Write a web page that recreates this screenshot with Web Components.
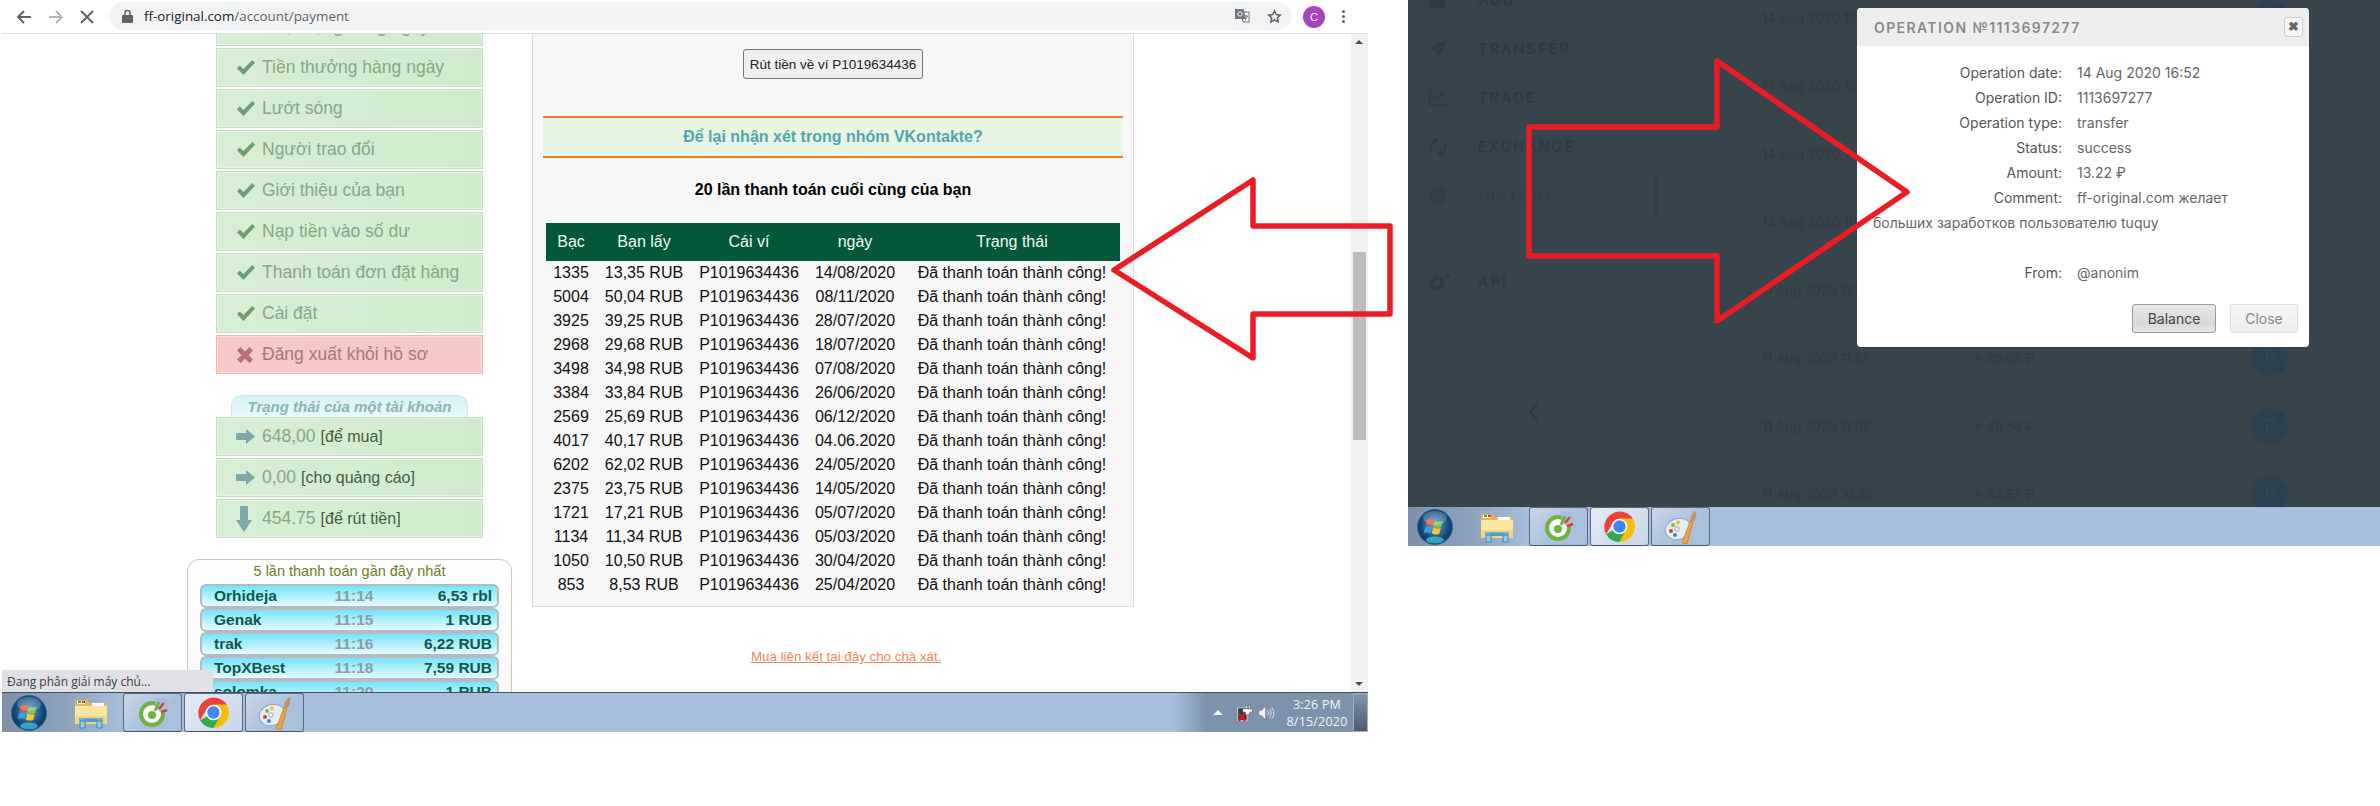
<!DOCTYPE html>
<html lang="vi">
<head>
<meta charset="utf-8">
<title>ff-original payment</title>
<style>
  html, body { margin: 0; background: #fff; }
  body { position: relative; width: 2380px; height: 806px; overflow: hidden; font-family: "Liberation Sans", Arial, sans-serif; }
  .shots { display: flex; align-items: flex-start; padding-left: 2px; }
</style>
</head>
<body>
<div class="shots">
  <browser-window url="ff-original.com" path="/account/payment">
    <account-sidebar></account-sidebar>
    <payment-panel></payment-panel>
    <span slot="status">Đang phân giải máy chủ...</span>
  </browser-window>
  <dark-window>
    <op-modal number="1113697277"></op-modal>
  </dark-window>
</div>
<red-arrow points="1114,270 1253,180 1253,226 1390,226 1390,314 1253,314 1253,358"></red-arrow>
<red-arrow points="1907,192 1717,61 1717,127 1529,127 1529,256 1717,256 1717,321"></red-arrow>

<script>
const ICONS = {
  check: `<svg width="20" height="17" viewBox="0 0 20 17"><path fill="currentColor" d="M1 9.2 3.7 6.4 7.4 10 16.3.9 19 3.700 7.4 16z"/></svg>`,
  cross: `<svg width="18" height="18" viewBox="0 0 18 18"><path fill="currentColor" d="M4.500 1 9 5.500 13.500 1 17 4.500 12.500 9 17 13.500 13.500 17 9 12.500 4.500 17 1 13.500 5.500 9 1 4.500z"/></svg>`,
  right: `<svg width="20" height="17" viewBox="0 0 20 17"><path fill="currentColor" d="M1 5h9V1l9 7.500-9 7.500v-4H1a1 1 0 0 1-1-1V6a1 1 0 0 1 1-1z"/></svg>`,
  down: `<svg width="16" height="26" viewBox="0 0 16 26"><path fill="currentColor" d="M5 0h6a1 1 0 0 1 1 1v13h4l-8 12-8-12h4V1a1 1 0 0 1 1-1z"/></svg>`,
  orb: `<svg width="36" height="36" viewBox="0 0 36 36"><defs><radialGradient id="o" cx=".5" cy=".45" r=".6"><stop offset="0" stop-color="#5fa8d8"/><stop offset=".65" stop-color="#154a7e"/><stop offset="1" stop-color="#0b2a4c"/></radialGradient></defs><circle cx="18" cy="18" r="17.500" fill="url(#o)" stroke="#1e6e98"/><path fill="#e8552b" d="M10 11c3-1.500 5-1 7 .2l-1.600 6c-2-1.200-4-1.500-7-.2z"/><path fill="#8cc63f" d="M18 11.700c2.500 1.300 4.500 1.500 7.500.2l-1.500 6c-3 1.300-5 1-7.500-.2z"/><path fill="#3aa0e0" d="M8.200 18c3-1.300 5-1 7 .2l-1.600 6c-2-1.200-4-1.500-7-.2z"/><path fill="#fdc52f" d="M16.300 18.500c2.500 1.300 4.500 1.500 7.500.2l-1.500 6c-3 1.300-5 1-7.500-.2z"/><ellipse cx="18" cy="9" rx="12" ry="7" fill="#fff" opacity=".22"/><ellipse cx="18" cy="31" rx="9" ry="3.500" fill="#46d6e8" opacity=".65"/></svg>`,
  folder: `<svg width="34" height="32" viewBox="0 0 34 32"><path fill="#e2b95a" d="M1 3h12l2 3h17a1 1 0 0 1 1 1v20H1z"/><path fill="#fff" d="M3 4h8v3H3zM18 6h12v3H18z"/><path fill="#d34" d="M8 4h3v2H8z"/><path fill="#3a3" d="M4 4h3v2H4z"/><path fill="#fbe6a2" d="M1 9h32v18H1z"/><path fill="#f5d67d" d="M1 19h32v8H1z"/><path fill="#6fb2dc" d="M5 21h24v3H5z"/><path fill="#8fcdea" stroke="#3d87b8" d="M6 24h5v7H6zM23 24h5v7h-5z"/><path fill="#4f9ccc" d="M11 22h12v3H11z"/></svg>`,
  coccoc: `<svg width="30" height="30" viewBox="0 0 30 30"><circle cx="14" cy="16" r="13" fill="#6db43e"/><circle cx="14" cy="16" r="9" fill="#fff"/><circle cx="14" cy="17" r="4" fill="#6db43e"/><path fill="#a7bfdc" d="M17 0h13v14H22l-4-4z"/><path fill="none" stroke="#6db43e" stroke-width="3" d="M17 13 21 4"/><path fill="none" stroke="#d8432e" stroke-width="2.500" d="M21 11 26 5M23 14l6-2"/></svg>`,
  chrome: `<svg width="31" height="31" viewBox="4 4 40 40"><path fill="#ea4335" d="M41.300 14A20 20 0 0 0 6.700 34L15.300 19 24 14z"/><path fill="#34a853" d="M6.700 34A20 20 0 0 0 24 44L32.700 29H15.300z"/><path fill="#fbbc04" d="M24 44A20 20 0 0 0 41.300 14H24L32.700 29z"/><circle cx="24" cy="24" r="10" fill="#fff"/><circle cx="24" cy="24" r="8" fill="#4285f4"/></svg>`,
  palette: `<svg width="34" height="34" viewBox="0 0 34 34"><ellipse cx="14" cy="19" rx="13" ry="10.500" transform="rotate(-18 14 19)" fill="#e5ecf2" stroke="#8fa3b6"/><circle cx="7" cy="21" r="2" fill="#d8432e"/><circle cx="9" cy="15" r="2" fill="#7bbf43"/><circle cx="14" cy="12.500" r="2" fill="#f2c230"/><circle cx="13" cy="19" r="2.200" fill="#fff" stroke="#8fa3b6"/><circle cx="11" cy="25" r="2" fill="#3d87c8"/><path fill="#eea23c" stroke="#b8752a" stroke-width=".6" d="M18 33 26 11l3 1-6 22z"/><path fill="#c9915a" d="M26 11c0-4 2-8 6-10 1 4 0 8-3 11z"/></svg>`,
  power: `<svg width="20" height="22" viewBox="0 0 20 22"><path fill="#2c3a46" stroke="#dde" d="M2 5h11v15H2z"/><path fill="#fff" stroke="#333" stroke-width=".5" d="M8 6h11v4h-3v3h-5v-3H8zM11 2h2v4h-2zM15 2h2v4h-2z"/><path fill="none" stroke="#e0141c" stroke-width="3" d="M3 12l8 8m0-8-8 8"/></svg>`,
  speaker: `<svg width="20" height="18" viewBox="0 0 20 18"><path fill="#eef2f6" stroke="#5c6d80" stroke-width=".6" d="M1 6h3l5-5v16l-5-5H1z"/><path fill="none" stroke="#eef2f6" d="M11 6c1.500 2 1.500 4 0 6M13.500 4c2.500 3 2.500 7 0 10M16 2c3.500 4 3.500 10 0 14"/></svg>`,
  back: `<svg width="16" height="16" viewBox="0 0 16 16"><path fill="none" stroke="currentColor" stroke-width="2" d="M15 8H2M8 2 2 8l6 6"/></svg>`,
  forward: `<svg width="16" height="16" viewBox="0 0 16 16"><path fill="none" stroke="currentColor" stroke-width="2" d="M1 8h13M8 2l6 6-6 6"/></svg>`,
  stop: `<svg width="14" height="14" viewBox="0 0 14 14"><path fill="none" stroke="currentColor" stroke-width="2" d="M1 1l12 12M13 1 1 13"/></svg>`,
  lock: `<svg width="11" height="14" viewBox="0 0 11 14"><path fill="#5f6368" d="M1 6h9a1 1 0 0 1 1 1v6a1 1 0 0 1-1 1H1a1 1 0 0 1-1-1V7a1 1 0 0 1 1-1z"/><path fill="none" stroke="#5f6368" stroke-width="1.500" d="M3 6V4a2.500 2.500 0 0 1 5 0v2"/></svg>`,
  translate: `<svg width="15" height="14" viewBox="0 0 15 14"><path fill="#fff" stroke="#70757a" d="M6 3h8v10H8z"/><path fill="#70757a" d="M0 0h8.500l2.500 10H0z"/><circle cx="5" cy="5" r="2.200" fill="none" stroke="#fff"/><path stroke="#70757a" d="M10 7h3M11.500 6v1M10.500 11l2-4"/></svg>`,
  star: `<svg width="15" height="15" viewBox="0 0 24 24"><path fill="none" stroke="#5f6368" stroke-width="2.500" d="M12 3l2.800 6 6.500.8-4.800 4.500 1.300 6.500L12 17.500 6.200 20.800l1.300-6.500L2.700 9.800 9.200 9z"/></svg>`,
  plane: `<svg width="18" height="18" viewBox="0 0 18 18"><path fill="currentColor" d="M18 0 0 8l7 3 2 7z"/></svg>`,
  chart: `<svg width="18" height="16" viewBox="0 0 18 16"><path fill="none" stroke="currentColor" stroke-width="1.300" d="M1 0v15h16M3 12l3-6 3 4 3-8 2 5 2-6"/></svg>`,
  swap: `<svg width="18" height="18" viewBox="0 0 18 18"><path fill="none" stroke="currentColor" stroke-width="1.500" d="M3 13A7 7 0 0 1 8 2M15 5a7 7 0 0 1-5 11M6 0l2.500 2L6 5M12 18l-2.500-2 2.500-3"/></svg>`,
  clock: `<svg width="18" height="18" viewBox="0 0 18 18"><circle cx="9" cy="9" r="8.500" fill="#2f414d"/><path fill="none" stroke="#37444c" stroke-width="1.800" d="M9 4v5.500h4"/></svg>`,
  gears: `<svg width="22" height="18" viewBox="0 0 22 18"><circle cx="8" cy="10" r="5" fill="none" stroke="currentColor" stroke-width="3.500"/><path stroke="currentColor" stroke-width="2.500" d="M8 1v3M8 16v2M0 10h3M13 10h3M2.500 4.500l2 2M11.500 13.500l2 2M13.500 4.500l-2 2M4.500 13.500l-2 2"/><circle cx="19" cy="3" r="2" fill="currentColor"/></svg>`,
  box: `<svg width="16" height="16" viewBox="0 0 16 16"><rect width="16" height="16" rx="2" fill="currentColor"/></svg>`,
};

class BrowserWindow extends HTMLElement {
  constructor() {
    super();
    this.attachShadow({ mode: "open" });
    this.shadowRoot.innerHTML = `
      <style>
        :host { display: flex; flex-direction: column; flex: none; width: 1366px; height: 732px; }
        .toolbar { flex: none; height: 33px; border-bottom: 1px solid #dadce0; display: flex; align-items: center; color: #5f6368; }
        .nav { width: 108px; padding-left: 14px; box-sizing: border-box; display: flex; align-items: center; gap: 16px; flex: none; }
        .nav .fwd { color: #b4b6b9; }
        .nav span { display: flex; }
        .omni { width: 1182px; height: 28px; margin-top: -1px; flex: none; border-radius: 14px; background: #f1f3f4; display: flex; align-items: center; padding: 0 10px 0 12px; box-sizing: border-box; font: 13.400px "Open Sans", sans-serif; color: #5f6368; }
        .omni b { font-weight: 400; color: #202124; margin-left: 11px; }
        .omni .end { margin-left: auto; display: flex; align-items: center; gap: 17px; }
        .omni svg { display: block; }
        .avatar { width: 22px; height: 22px; border-radius: 50%; background: #a742c0; color: #fff; font: 11px "Liberation Sans", sans-serif; display: flex; align-items: center; justify-content: center; margin-left: 11px; flex: none; }
        .dots { margin-left: 17px; display: flex; flex-direction: column; gap: 2px; }
        .dots i { width: 3px; height: 3px; border-radius: 50%; background: #5f6368; display: block; }
        .view { flex: 1; min-height: 0; position: relative; display: flex; overflow: hidden; }
        .page { flex: 1; min-width: 0; overflow: hidden; display: flex; align-items: flex-start; padding-left: 185px; gap: 20px; }
        .scroll { width: 17px; flex: none; background: #f1f1f1; position: relative; }
        .thumb { position: absolute; left: 2px; right: 2px; top: 218px; height: 188px; background: #bdbdbd; }
        .scroll::before, .scroll::after { content: ""; position: absolute; left: 4px; border: 4px solid transparent; border-left-width: 4.500px; border-right-width: 4.500px; }
        .scroll::before { top: 6px; border-top: 0; border-bottom: 4px solid #505050; }
        .scroll::after { bottom: 6px; border-bottom: 0; border-top: 4px solid #505050; }
        .status { position: absolute; left: 0; bottom: 0; width: 211px; height: 22px; background: #dfe1e5; border-radius: 0 5px 0 0; box-sizing: border-box; padding-left: 5px; font: 12px/23px "Open Sans", sans-serif; color: #3c4043; }
      </style>
      <div class="toolbar">
        <div class="nav"><span>${ICONS.back}</span><span class="fwd">${ICONS.forward}</span><span>${ICONS.stop}</span></div>
        <div class="omni">${ICONS.lock}<b>${this.getAttribute("url")}</b>${this.getAttribute("path")}
          <div class="end">${ICONS.translate}${ICONS.star}</div></div>
        <div class="avatar">C</div>
        <div class="dots"><i></i><i></i><i></i></div>
      </div>
      <div class="view">
        <div class="page"><slot></slot></div>
        <div class="scroll"><div class="thumb"></div></div>
        <div class="status"><slot name="status"></slot></div>
      </div>
      <task-bar tray></task-bar>
    `;
  }
}

class TaskBar extends HTMLElement {
  constructor() {
    super();
    this.attachShadow({ mode: "open" });
    const tray = this.hasAttribute("tray") ? `
      <div class="tray">
        <i class="up"></i>${ICONS.power}${ICONS.speaker}
        <div class="clock"><div>3:26 PM</div><div>8/15/2020</div></div>
        <div class="desk"></div>
      </div>` : "";
    this.shadowRoot.innerHTML = `
      <style>
        :host { display: flex; flex: none; height: 40px; background: #a7bfdc; box-sizing: border-box; border-top: 1px solid #46505c; }
        :host([flat]) { height: 39px; border-top: 0; }
        .start { width: 121px; flex: none; display: flex; align-items: center; gap: 27px; padding-left: 9px; box-sizing: border-box; background: linear-gradient(90deg, #7e90a8, #8fa3bd 55%, #a7bfdc); }
        .apps { display: flex; gap: 2px; }
        .app { width: 59px; box-sizing: border-box; display: flex; align-items: center; justify-content: center; border: 1px solid #5b6b7d; border-bottom-color: #46566a; border-radius: 3px; background: linear-gradient(135deg, #c8d6e8, #a9c0dc 60%); }
        .app.on { background: linear-gradient(135deg, #e4ebf4, #c6d5e8); }
        .tray { margin-left: auto; width: 195px; box-sizing: border-box; padding-left: 40px; display: flex; align-items: center; background: linear-gradient(90deg, #a7bfdc, #7d92ab 34px); color: #f2f5f8; }
        .up { width: 0; height: 0; border: 5px solid transparent; border-top: 0; border-bottom: 5px solid #f2f5f8; margin-right: 13px; }
        .tray svg:nth-of-type(2) { margin-left: 5px; }
        .clock { font: 12.500px/17px "Open Sans", sans-serif; text-align: center; width: 72px; margin-left: 6px; flex: none; letter-spacing: .2px; }
        .desk { width: 15px; height: 39px; box-sizing: border-box; margin-left: auto; flex: none; border: 1px solid #9fb0c2; background: linear-gradient(#8295ab, #4d5c6e); }
      </style>
      <div class="start">${ICONS.orb}${ICONS.folder}</div>
      <div class="apps">
        <div class="app">${ICONS.coccoc}</div>
        <div class="app on">${ICONS.chrome}</div>
        <div class="app">${ICONS.palette}</div>
      </div>
      ${tray}
    `;
  }
}

class SideLink extends HTMLElement {
  constructor() {
    super();
    this.attachShadow({ mode: "open" });
    this.shadowRoot.innerHTML = `
      <style>
        :host { display: flex; align-items: center; flex: none; width: 267px; height: 39px; box-sizing: border-box; padding-left: 19px; background: linear-gradient(90deg, #d7efd4, #d0ebcc); border: 1px solid #c4dfc0; outline: 1px solid #e6f3e4; outline-offset: -2px; color: #85a886; font-size: 17.500px; white-space: nowrap; }
        :host([tone="red"]) { background: #f6c9c6; border-color: #eab5b2; outline-color: #fadddb; color: #a87a78; }
        .ico { width: 26px; flex: none; display: flex; color: #6f9e72; }
        :host([tone="red"]) .ico { color: #b9706e; }
        :host([tone="blue"]) .ico { color: #7fa8a8; }
        ::slotted(small) { font-size: 16px; color: #3f5f3f; margin-left: 5px; }
      </style>
      <span class="ico">${ICONS[this.getAttribute("icon") || "check"]}</span><slot></slot>
    `;
  }
}

class AccountSidebar extends HTMLElement {
  constructor() {
    super();
    this.attachShadow({ mode: "open" });
    const links = ["Hoạt động hàng ngày", "Tiền thưởng hàng ngày", "Lướt sóng", "Người trao đổi", "Giới thiệu của bạn", "Nạp tiền vào số dư", "Thanh toán đơn đặt hàng", "Cài đặt"];
    const recent = [["Orhideja", "11:14", "6,53 rbl"], ["Genak", "11:15", "1 RUB"], ["trak", "11:16", "6,22 RUB"], ["TopXBest", "11:18", "7,59 RUB"], ["solomka", "11:20", "1 RUB"]];
    this.shadowRoot.innerHTML = `
      <style>
        :host { display: flex; flex-direction: column; align-items: center; flex: none; width: 325px; margin-top: -27px; gap: 2px; }
        .tab { flex: none; width: 237px; height: 22px; margin-top: 19px; margin-bottom: -2px; box-sizing: border-box; border: 1px solid #cfe7ea; border-bottom: 0; border-radius: 10px 10px 0 0; background: linear-gradient(#d8f1f5, #e9f8fa); text-align: center; font: italic bold 15px/21px "Liberation Sans", sans-serif; color: #8eb3b8; white-space: nowrap; }
        .recent { flex: none; width: 325px; margin-top: 19px; box-sizing: border-box; padding: 0 12px 12px; border: 1px solid #c9c9c9; border-radius: 12px; background: linear-gradient(#fff, #f7f7f7); }
        .recent h4 { margin: 0; height: 24px; font: 400 14.500px/22px "Liberation Sans", sans-serif; color: #6d7c1c; text-align: center; }
        .line { height: 24px; box-sizing: border-box; border: 2px solid #b4bcc1; border-radius: 6px; background: linear-gradient(#77e2fa, #e8fcff); display: grid; grid-template-columns: 110px 60px 1fr; align-items: center; padding: 0 5px 0 12px; font: bold 15.500px "Liberation Sans", sans-serif; color: #0c5a4a; }
        .line i { font-style: normal; color: #8a9fa5; text-align: center; }
        .line b { text-align: right; }
      </style>
      ${links.map(l => `<side-link>${l}</side-link>`).join("")}
      <side-link icon="cross" tone="red">Đăng xuất khỏi hồ sơ</side-link>
      <div class="tab">Trạng thái của một tài khoản</div>
      <side-link icon="right" tone="blue">648,00<small>[để mua]</small></side-link>
      <side-link icon="right" tone="blue">0,00<small>[cho quảng cáo]</small></side-link>
      <side-link icon="down" tone="blue">454.75<small>[để rút tiền]</small></side-link>
      <div class="recent">
        <h4>5 lần thanh toán gần đây nhất</h4>
        ${recent.map(r => `<div class="line"><span>${r[0]}</span><i>${r[1]}</i><b>${r[2]}</b></div>`).join("")}
      </div>
    `;
  }
}

class PaymentPanel extends HTMLElement {
  constructor() {
    super();
    this.attachShadow({ mode: "open" });
    const rows = [
      ["1335", "13,35 RUB", "14/08/2020"], ["5004", "50,04 RUB", "08/11/2020"], ["3925", "39,25 RUB", "28/07/2020"],
      ["2968", "29,68 RUB", "18/07/2020"], ["3498", "34,98 RUB", "07/08/2020"], ["3384", "33,84 RUB", "26/06/2020"],
      ["2569", "25,69 RUB", "06/12/2020"], ["4017", "40,17 RUB", "04.06.2020"], ["6202", "62,02 RUB", "24/05/2020"],
      ["2375", "23,75 RUB", "14/05/2020"], ["1721", "17,21 RUB", "05/07/2020"], ["1134", "11,34 RUB", "05/03/2020"],
      ["1050", "10,50 RUB", "30/04/2020"], ["853", "8,53 RUB", "25/04/2020"],
    ];
    this.shadowRoot.innerHTML = `
      <style>
        :host { display: block; flex: none; width: 602px; }
        .box { box-sizing: border-box; height: 573px; padding: 15px 10px 0; background: #f7f7f7; border: 1px solid #ddd; border-top: 0; display: flex; flex-direction: column; align-items: center; }
        button { flex: none; width: 180px; height: 30px; padding: 0; font: 13.500px "Liberation Sans", sans-serif; color: #222; background: #efefef; border: 1px solid #767676; border-radius: 3px; }
        .vk { flex: none; align-self: stretch; height: 42px; margin-top: 37px; box-sizing: border-box; border: solid #ee7d33; border-width: 2px 0; background: #e6f5e4; text-align: center; font: bold 16px/38px "Liberation Sans", sans-serif; color: #55a3ad; }
        h3 { margin: 0; flex: none; height: 65px; font: bold 16px/63px "Liberation Sans", sans-serif; color: #000; }
        table { flex: none; width: 574px; border-collapse: collapse; table-layout: fixed; font: 16px/24px "Liberation Sans", sans-serif; color: #111; }
        th { height: 38px; padding: 0; font-weight: 400; background: #04583a; color: #f2f7f4; }
        td { height: 24px; padding: 0; text-align: center; white-space: nowrap; }
        .link { display: block; margin: 40px 0 0 219px; width: 200px; font-size: 13.330px; line-height: 20px; color: #ef855a; text-decoration: underline; white-space: nowrap; }
      </style>
      <div class="box">
        <button>Rút tiền về ví P1019634436</button>
        <div class="vk">Để lại nhận xét trong nhóm VKontakte?</div>
        <h3>20 lần thanh toán cuối cùng của bạn</h3>
        <table>
          <colgroup><col style="width:50px"><col style="width:96px"><col style="width:114px"><col style="width:98px"><col></colgroup>
          <tr><th>Bạc</th><th>Bạn lấy</th><th>Cái ví</th><th>ngày</th><th>Trạng thái</th></tr>
          ${rows.map(r => `<tr><td>${r[0]}</td><td>${r[1]}</td><td>P1019634436</td><td>${r[2]}</td><td>Đã thanh toán thành công!</td></tr>`).join("")}
        </table>
      </div>
      <a class="link">Mua liên kết tại đây cho chà xát.</a>
    `;
  }
}

class DarkWindow extends HTMLElement {
  constructor() {
    super();
    this.attachShadow({ mode: "open" });
    const nav = [["box", "ADD"], ["plane", "TRANSFER"], ["chart", "TRADE"], ["swap", "EXCHANGE"], ["clock", "HISTORY"]];
    const hist = [
      ["14 Aug 2020 16:58", "+ 13.22 ₽"], ["14 Aug 2020 16:52", "+ 13.22 ₽"], ["14 Aug 2020 14:31", "+ 20.10 ₽"], ["14 Aug 2020 10:12", "+ 18.40 ₽"],
      ["11 Aug 2020 11:25", "+ 22.05 ₽"], ["11 Aug 2020 11:13", "+ 35.66 ₽"], ["11 Aug 2020 11:07", "+ 49.56 ₽"], ["11 Aug 2020 10:55", "+ 34.67 ₽"],
    ];
    this.shadowRoot.innerHTML = `
      <style>
        :host { display: flex; flex-direction: column; flex: none; width: 972px; margin-left: 40px; }
        .screen { position: relative; height: 507px; overflow: hidden; display: flex; background: #37444c; color: #2f3b43; }
        .menu { flex: none; width: 249px; margin-top: -25px; font: 600 14.500px "Inter", sans-serif; letter-spacing: 2px; }
        .item { height: 49px; display: flex; align-items: center; padding-left: 21px; color: #2f3b43; }
        .item .i { width: 49px; flex: none; display: flex; color: #2f3b43; }
        .item .bar { width: 2px; height: 42px; margin-left: auto; background: #2d3f4b; }
        .item.hist { color: #30414d; }
        .item.api { margin-top: 37px; }
        .chev { margin: 100px 0 0 123px; width: 10px; height: 10px; border: solid #2f3b43; border-width: 0 0 2px 2px; transform: rotate(45deg); }
        .rows { flex: 1; margin: -16px 0 0 78px; }
        .row { height: 68px; box-sizing: border-box; border-bottom: 1px solid #35424a; padding-left: 27px; display: grid; grid-template-columns: 212px 174px 104px 36px; align-items: center; font: 13px "Inter", sans-serif; color: #303c44; }
        .p { width: 36px; height: 36px; margin-left: 0; border-radius: 50%; background: #2b4150; color: #37444c; font: bold 19px/36px "Liberation Sans", sans-serif; text-align: center; }
      </style>
      <div class="screen">
        <div class="menu">
          ${nav.map(n => `<div class="item ${n[1] == "HISTORY" ? "hist" : ""}"><span class="i">${ICONS[n[0]]}</span>${n[1]}${n[1] == "HISTORY" ? '<span class="bar"></span>' : ""}</div>`).join("")}
          <div class="item api"><span class="i">${ICONS.gears}</span>API</div>
          <div class="chev"></div>
        </div>
        <div class="rows">
          ${hist.map(h => `<div class="row"><span>${h[0]}</span><span>${h[1]}</span><span>–</span><span class="p">P</span></div>`).join("")}
        </div>
        <slot></slot>
      </div>
      <task-bar flat></task-bar>
    `;
  }
}

class OpModal extends HTMLElement {
  constructor() {
    super();
    this.attachShadow({ mode: "open" });
    const n = this.getAttribute("number");
    const rows = [["Operation date:", "14 Aug 2020 16:52"], ["Operation ID:", n], ["Operation type:", "transfer"], ["Status:", "success"], ["Amount:", "13.22 ₽"]];
    this.shadowRoot.innerHTML = `
      <style>
        :host { position: absolute; left: 449px; top: 8px; width: 452px; height: 339px; background: #fff; border-radius: 4px; overflow: hidden; font: 14px/25px "Inter", sans-serif; color: #666; }
        header { height: 38px; background: #eee; display: flex; align-items: center; padding: 0 6px 0 17px; }
        h2 { margin: 0; font: 600 14px "Inter", sans-serif; letter-spacing: 1.400px; color: #8a8a8a; }
        .x { margin-left: auto; width: 19px; height: 20px; box-sizing: border-box; border: 1px solid #ccc; border-radius: 3px; background: #f6f6f6; color: #666; font: bold 13px/18px "Liberation Sans", sans-serif; text-align: center; }
        .body { padding: 14px 16px 0; height: 250px; box-sizing: border-box; }
        .body div { min-height: 25px; }
        label { display: inline-block; width: 189px; margin-right: 15px; text-align: right; color: #555; }
        footer { display: flex; justify-content: flex-end; gap: 14px; padding-right: 11px; margin-top: 8px; }
        button { height: 29px; padding: 0; font: 14px "Inter", sans-serif; border-radius: 3px; }
        .bal { width: 84px; border: 1px solid #999; background: linear-gradient(#e8e8e8, #d8d8d8 70%, #e6e6e6); color: #444; }
        .cls { width: 68px; border: 1px solid #ddd; background: linear-gradient(#f8f8f8, #ececec); color: #888; }
      </style>
      <header><h2>OPERATION №${n}</h2><div class="x">✖</div></header>
      <div class="body">
        ${rows.map(r => `<div><label>${r[0]}</label>${r[1]}</div>`).join("")}
        <div><label>Comment:</label>ff-original.com желает<br>больших заработков пользователю tuquy</div>
        <div>&nbsp;</div>
        <div><label>From:</label>@anonim</div>
      </div>
      <footer><button class="bal">Balance</button><button class="cls">Close</button></footer>
    `;
  }
}

class RedArrow extends HTMLElement {
  constructor() {
    super();
    this.attachShadow({ mode: "open" });
    this.shadowRoot.innerHTML = `
      <style>
        :host { position: absolute; left: 0; top: 0; pointer-events: none; }
        svg { display: block; }
      </style>
      <svg width="2380" height="806"><polygon points="${this.getAttribute("points")}" fill="none" stroke="#ed1c24" stroke-width="5.500" stroke-linejoin="round"/></svg>
    `;
  }
}

window.customElements.define("task-bar", TaskBar);
window.customElements.define("side-link", SideLink);
window.customElements.define("account-sidebar", AccountSidebar);
window.customElements.define("payment-panel", PaymentPanel);
window.customElements.define("browser-window", BrowserWindow);
window.customElements.define("op-modal", OpModal);
window.customElements.define("dark-window", DarkWindow);
window.customElements.define("red-arrow", RedArrow);
</script>
</body>
</html>
